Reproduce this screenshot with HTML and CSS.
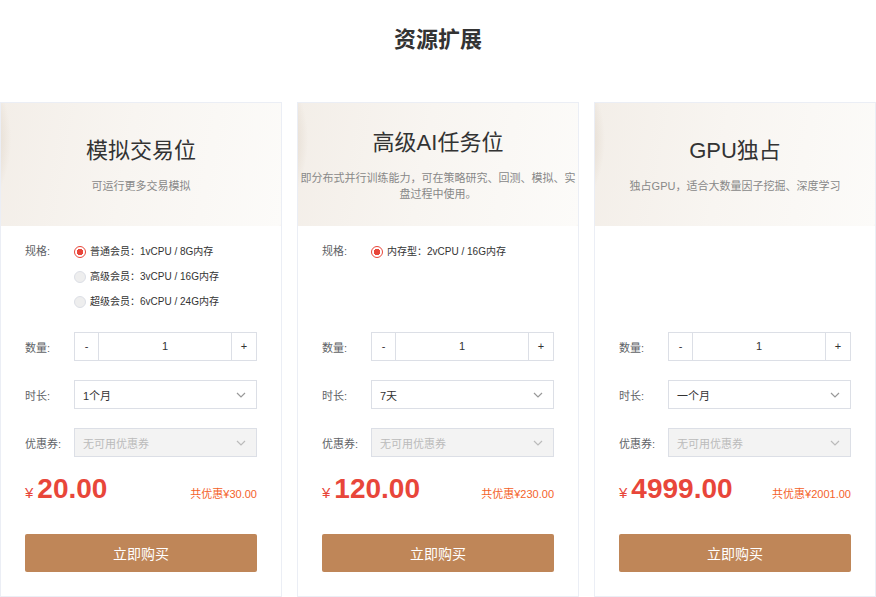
FILE: index.html
```html
<!DOCTYPE html>
<html lang="zh-CN">
<head>
    <meta charset="UTF-8">
    <meta name="viewport" content="width=device-width, initial-scale=1.0">
    <title>资源扩展</title>
    <link rel="stylesheet" href="styles.css">
</head>
<body>
    <h2 class="page-title">资源扩展</h2>

    <div class="cards">
        <!-- 模拟交易位 -->
        <div class="card">
            <div class="card-head">
                <div class="card-title">模拟交易位</div>
                <div class="card-desc">可运行更多交易模拟</div>
            </div>
            <div class="card-body">
                <div class="spec">
                    <div class="label">规格:</div>
                    <div class="radios">
                        <div class="radio checked"><span class="dot"></span>普通会员：1vCPU / 8G内存</div>
                        <div class="radio"><span class="dot"></span>高级会员：3vCPU / 16G内存</div>
                        <div class="radio"><span class="dot"></span>超级会员：6vCPU / 24G内存</div>
                    </div>
                </div>
                <div class="form-row">
                    <div class="label">数量:</div>
                    <div class="counter">
                        <span class="btn-minus">-</span>
                        <span class="count">1</span>
                        <span class="btn-plus">+</span>
                    </div>
                </div>
                <div class="form-row">
                    <div class="label">时长:</div>
                    <div class="select">
                        <span>1个月</span>
                        <svg width="10" height="6" viewBox="0 0 10 6"><path d="M1 1l4 4 4-4" fill="none" stroke="#999" stroke-width="1.2"/></svg>
                    </div>
                </div>
                <div class="form-row">
                    <div class="label">优惠券:</div>
                    <div class="select disabled">
                        <span>无可用优惠券</span>
                        <svg width="10" height="6" viewBox="0 0 10 6"><path d="M1 1l4 4 4-4" fill="none" stroke="#bbb" stroke-width="1.2"/></svg>
                    </div>
                </div>
                <div class="price-row">
                    <div class="price"><span class="yen">¥</span>20.00</div>
                    <div class="save">共优惠¥30.00</div>
                </div>
                <button class="buy">立即购买</button>
            </div>
        </div>

        <!-- 高级AI任务位 -->
        <div class="card">
            <div class="card-head">
                <div class="card-title">高级AI任务位</div>
                <div class="card-desc">即分布式并行训练能力，可在策略研究、回测、模拟、实盘过程中使用。</div>
            </div>
            <div class="card-body">
                <div class="spec">
                    <div class="label">规格:</div>
                    <div class="radios">
                        <div class="radio checked"><span class="dot"></span>内存型：2vCPU / 16G内存</div>
                    </div>
                </div>
                <div class="form-row">
                    <div class="label">数量:</div>
                    <div class="counter">
                        <span class="btn-minus">-</span>
                        <span class="count">1</span>
                        <span class="btn-plus">+</span>
                    </div>
                </div>
                <div class="form-row">
                    <div class="label">时长:</div>
                    <div class="select">
                        <span>7天</span>
                        <svg width="10" height="6" viewBox="0 0 10 6"><path d="M1 1l4 4 4-4" fill="none" stroke="#999" stroke-width="1.2"/></svg>
                    </div>
                </div>
                <div class="form-row">
                    <div class="label">优惠券:</div>
                    <div class="select disabled">
                        <span>无可用优惠券</span>
                        <svg width="10" height="6" viewBox="0 0 10 6"><path d="M1 1l4 4 4-4" fill="none" stroke="#bbb" stroke-width="1.2"/></svg>
                    </div>
                </div>
                <div class="price-row">
                    <div class="price"><span class="yen">¥</span>120.00</div>
                    <div class="save">共优惠¥230.00</div>
                </div>
                <button class="buy">立即购买</button>
            </div>
        </div>

        <!-- GPU独占 -->
        <div class="card">
            <div class="card-head">
                <div class="card-title">GPU独占</div>
                <div class="card-desc">独占GPU，适合大数量因子挖掘、深度学习</div>
            </div>
            <div class="card-body">
                <div class="spec"></div>
                <div class="form-row">
                    <div class="label">数量:</div>
                    <div class="counter">
                        <span class="btn-minus">-</span>
                        <span class="count">1</span>
                        <span class="btn-plus">+</span>
                    </div>
                </div>
                <div class="form-row">
                    <div class="label">时长:</div>
                    <div class="select">
                        <span>一个月</span>
                        <svg width="10" height="6" viewBox="0 0 10 6"><path d="M1 1l4 4 4-4" fill="none" stroke="#999" stroke-width="1.2"/></svg>
                    </div>
                </div>
                <div class="form-row">
                    <div class="label">优惠券:</div>
                    <div class="select disabled">
                        <span>无可用优惠券</span>
                        <svg width="10" height="6" viewBox="0 0 10 6"><path d="M1 1l4 4 4-4" fill="none" stroke="#bbb" stroke-width="1.2"/></svg>
                    </div>
                </div>
                <div class="price-row">
                    <div class="price"><span class="yen">¥</span>4999.00</div>
                    <div class="save">共优惠¥2001.00</div>
                </div>
                <button class="buy">立即购买</button>
            </div>
        </div>
    </div>
</body>
</html>
```

FILE: styles.css
```css
body {
    margin: 0;
    font-family: "Liberation Sans", "Noto Sans CJK SC", sans-serif;
    color: #333;
    background: #fff;
}

.page-title {
    margin: 0;
    padding-top: 25px;
    height: 77px;
    line-height: 30px;
    font-size: 22px;
    font-weight: bold;
    text-align: center;
    color: #333;
}

.cards {
    display: grid;
    grid-template-columns: repeat(3, 282px);
    gap: 15px;
}

.card {
    border: 1px solid #ebeef5;
}

.card-head {
    height: 123px;
    display: flex;
    flex-direction: column;
    justify-content: center;
    align-items: center;
    padding: 0 2px;
    text-align: center;
    background:
        radial-gradient(circle at 115% 135%, rgba(231, 218, 200, 0.7) 0, rgba(231, 218, 200, 0.7) 55px, rgba(231, 218, 200, 0) 62px),
        radial-gradient(circle at -40% 30%, rgba(225, 215, 203, 0.6) 0, rgba(225, 215, 203, 0.6) 110px, rgba(225, 215, 203, 0) 122px),
        linear-gradient(100deg, #f3eee8 0%, #f8f5f1 45%, #fcfbf9 100%);
}

.card-title {
    font-size: 22px;
    line-height: 30px;
    color: #333;
}

.card-desc {
    margin-top: 12px;
    font-size: 11px;
    line-height: 16px;
    color: #888;
}

.card-body {
    padding: 13px 24px 24px;
}

.label {
    width: 49px;
    flex-shrink: 0;
    font-size: 11px;
    color: #606266;
}

.spec {
    display: flex;
    height: 75px;
    margin-bottom: 18px;
    line-height: 25px;
}

.radio {
    display: flex;
    align-items: center;
    height: 25px;
    font-size: 10px;
    color: #333;
}

.radio .dot {
    width: 10px;
    height: 10px;
    margin-right: 4px;
    border: 1px solid #dcdfe6;
    border-radius: 50%;
    background: #eee;
    box-sizing: content-box;
}

.radio.checked .dot {
    border-color: #e8463a;
    background: radial-gradient(circle, #e8463a 0, #e8463a 3px, #fff 3.5px);
}

.form-row {
    display: flex;
    align-items: center;
    margin-bottom: 19px;
}

.counter {
    flex: 1;
    display: flex;
    height: 29px;
    border: 1px solid #dcdfe6;
    box-sizing: border-box;
    font-size: 11px;
    line-height: 27px;
    text-align: center;
}

.btn-minus {
    width: 23px;
    border-right: 1px solid #dcdfe6;
}

.btn-plus {
    width: 24px;
    border-left: 1px solid #dcdfe6;
}

.count {
    flex: 1;
}

.select {
    flex: 1;
    display: flex;
    align-items: center;
    justify-content: space-between;
    height: 29px;
    padding: 0 10px 0 8px;
    border: 1px solid #dcdfe6;
    box-sizing: border-box;
    font-size: 11px;
    color: #333;
}

.select.disabled {
    background: #f3f3f3;
    color: #bbb;
}

.price-row {
    display: flex;
    align-items: baseline;
    justify-content: space-between;
    margin-top: -7px;
    height: 40px;
    line-height: 40px;
}

.price {
    font-size: 28px;
    font-weight: bold;
    color: #e8463a;
}

.price .yen {
    font-size: 15px;
    font-weight: normal;
    margin-right: 4px;
}

.save {
    font-size: 11px;
    color: #f4622a;
}

.buy {
    display: block;
    width: 100%;
    height: 38px;
    margin-top: 25px;
    padding: 0;
    border: none;
    border-radius: 2px;
    background-color: #bf8658;
    color: #fff;
    font-family: inherit;
    font-size: 14px;
    cursor: pointer;
}
```
